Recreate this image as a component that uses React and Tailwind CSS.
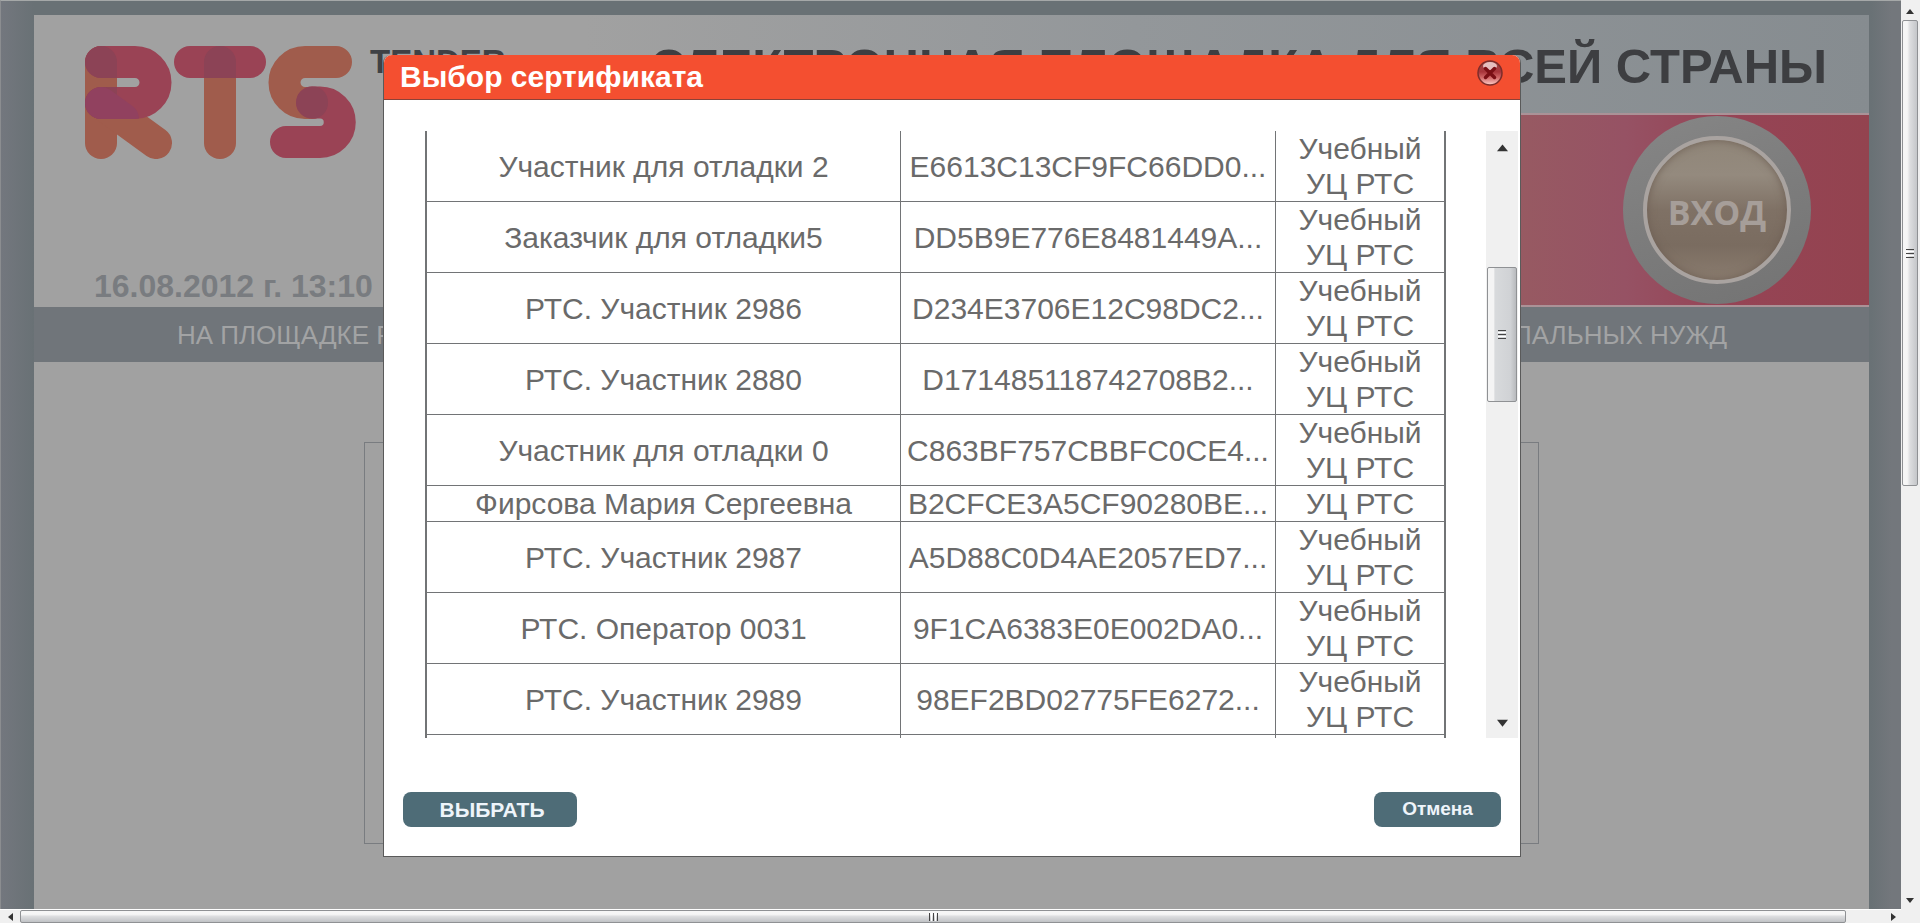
import React, { useState } from 'react';

const certificates = [
  { owner: 'Участник для отладки 2', thumbprint: 'E6613C13CF9FC66DD0...', issuer: 'Учебный УЦ РТС' },
  { owner: 'Заказчик для отладки5', thumbprint: 'DD5B9E776E8481449A...', issuer: 'Учебный УЦ РТС' },
  { owner: 'РТС. Участник 2986', thumbprint: 'D234E3706E12C98DC2...', issuer: 'Учебный УЦ РТС' },
  { owner: 'РТС. Участник 2880', thumbprint: 'D171485118742708B2...', issuer: 'Учебный УЦ РТС' },
  { owner: 'Участник для отладки 0', thumbprint: 'C863BF757CBBFC0CE4...', issuer: 'Учебный УЦ РТС' },
  { owner: 'Фирсова Мария Сергеевна', thumbprint: 'B2CFCE3A5CF90280BE...', issuer: 'УЦ РТС' },
  { owner: 'РТС. Участник 2987', thumbprint: 'A5D88C0D4AE2057ED7...', issuer: 'Учебный УЦ РТС' },
  { owner: 'РТС. Оператор 0031', thumbprint: '9F1CA6383E0E002DA0...', issuer: 'Учебный УЦ РТС' },
  { owner: 'РТС. Участник 2989', thumbprint: '98EF2BD02775FE6272...', issuer: 'Учебный УЦ РТС' },
];

function Logo() {
  return (
    <svg className="w-[271px] h-[113px]" viewBox="0 0 271 113" fill="none" strokeWidth="32" strokeLinecap="round" strokeLinejoin="round" aria-label="RTS">
      <defs>
        <mask id="rts-red" maskUnits="userSpaceOnUse" x="0" y="0" width="271" height="113">
          <g stroke="#fff">
            <path d="M16 16H50a20.5 20.5 0 0 1 0 41H16" />
            <path d="M105 16H165" />
            <path d="M227 56.500H235a19.700 19.700 0 0 1 0 39.500H201" />
          </g>
        </mask>
      </defs>
      <g stroke="#a05c4c">
        <path d="M16 16V97" />
        <path d="M16 57L71 97" />
        <path d="M135 16V97" />
        <path d="M251 16H220a20.500 20.500 0 0 0 0 41H227" />
      </g>
      <g stroke="#9a4355">
        <path d="M16 16H50a20.500 20.500 0 0 1 0 41H16" />
        <path d="M105 16H165" />
        <path d="M227 56.500H235a19.700 19.700 0 0 1 0 39.500H201" />
      </g>
      <g stroke="#8c4356" mask="url(#rts-red)">
        <path d="M16 16V97" />
        <path d="M135 16V97" />
        <path d="M227 56V57" />
      </g>
      <path d="M16 57L38 73" stroke="#91415f" mask="url(#rts-red)" />
    </svg>
  );
}

function Arrow({ dir, className = 'size-2' }) {
  const points = { up: '0,6 4,1 8,6', down: '0,2 8,2 4,7', left: '6,0 1,4 6,8', right: '2,0 7,4 2,8' };
  return (
    <svg className={className} viewBox="0 0 8 8"><polygon points={points[dir]} fill="#333" /></svg>
  );
}

function VerticalGrip() {
  return (
    <span className="flex flex-col gap-px">
      <span className="block w-2 h-px bg-[#444]" />
      <span className="block w-2 h-px bg-white" />
      <span className="block w-2 h-px bg-[#444]" />
      <span className="block w-2 h-px bg-white" />
      <span className="block w-2 h-px bg-[#444]" />
    </span>
  );
}

function PageHeader() {
  return (
    <header className="flex h-[292px] bg-[linear-gradient(90deg,#a1a1a1_30%,#93979a_60%,#868c90_100%)]">
      <div className="w-[480px] shrink-0 flex flex-col justify-between pl-[51px] pt-[31px] pb-[3px] bg-[#a1a1a1]">
        <div className="flex items-start">
          <Logo />
          <span className="ml-[14px] text-[33px] leading-8 font-bold text-[#3f4145]">TENDER</span>
        </div>
        <time className="pl-[9px] text-[32px] leading-9 font-bold text-[#797c80] whitespace-nowrap">16.08.2012 г. 13:10</time>
      </div>
      <div className="flex-1 min-w-0 flex flex-col">
        <div className="h-[98px] pr-[42px] flex items-center justify-end">
          <h1 className="pt-1 text-[49px] leading-14 font-bold text-[#3d3e41] whitespace-nowrap">ЭЛЕКТРОННАЯ ПЛОЩАДКА ДЛЯ ВСЕЙ СТРАНЫ</h1>
        </div>
        <div className="flex-1 flex items-center justify-end pr-[58px] border-y-2 border-[#ab9297] bg-[linear-gradient(90deg,#975a62_74%,#965264_82%,#964456_89%,#93434f_100%)]">
          <button type="button" className="size-[188px] rounded-full flex items-center justify-center bg-[linear-gradient(160deg,#868686,#7c7c7c_50%,#737373)]">
            <span className="size-[148px] pt-1 rounded-full border-4 border-[#a9a3a0] flex items-center justify-center bg-[linear-gradient(180deg,#908679_0%,#948a7e_25%,#7f7165_50%,#7a6c60_75%,#8a7c6f_100%)] shadow-[inset_0_0_8px_#6e5f54] font-['Open_Sans',sans-serif] text-[34px] font-bold text-[#a69e99]">ВХОД</span>
          </button>
        </div>
      </div>
    </header>
  );
}

function CloseIcon() {
  return (
    <svg className="size-7" viewBox="0 0 28 28">
      <defs>
        <linearGradient id="close-ball" x1="0" y1="0" x2="0" y2="1">
          <stop offset="0" stopColor="#9c4a48" />
          <stop offset=".45" stopColor="#a8343a" />
          <stop offset=".7" stopColor="#d26a6a" />
          <stop offset="1" stopColor="#ffd0cb" />
        </linearGradient>
      </defs>
      <circle cx="14" cy="14" r="12" fill="url(#close-ball)" stroke="#7d2d2a" strokeWidth="1.500" />
      <ellipse cx="14" cy="7" rx="7" ry="4" fill="#f6dedd" opacity=".8" />
      <path d="M9.500 9.500L18.500 18.500M18.500 9.500L9.500 18.500" stroke="#7a0f15" strokeWidth="3.500" strokeLinecap="round" />
    </svg>
  );
}

function CertificateDialog({ onClose }) {
  const [selected, setSelected] = useState(null);

  return (
    <div role="dialog" aria-labelledby="dialog-title" className="w-[1138px] max-w-full rounded-t-lg border border-t-0 border-[#5a5a5a] bg-white">
      <div className="h-[45px] flex items-center justify-between pl-4 pr-4 rounded-t-lg bg-[#f44f30] border-b border-[#8c4238]">
        <h2 id="dialog-title" className="text-[30px] leading-9 font-bold text-white">Выбор сертификата</h2>
        <button type="button" aria-label="Закрыть" onClick={onClose} className="mb-2"><CloseIcon /></button>
      </div>

      <div className="flex justify-between h-[607px] mt-[31px] pl-[41px] pr-0.5 overflow-hidden">
        <div className="flex-1 mr-10 overflow-hidden">
          <table className="w-full table-fixed border-separate border-spacing-0 border-x-2 border-[#727476] text-[30px] leading-[35px] text-center text-[#6a6a6a]">
            <colgroup>
              <col />
              <col className="w-[375px]" />
              <col className="w-[169px]" />
            </colgroup>
            <tbody>
              {certificates.map((cert) => (
                <tr key={cert.thumbprint} onClick={() => setSelected(cert.thumbprint)} aria-selected={selected === cert.thumbprint}>
                  <td className="p-0 border-b border-[#727476]">{cert.owner}</td>
                  <td className="p-0 border-b border-l border-[#727476] whitespace-nowrap">{cert.thumbprint}</td>
                  <td className="px-5 py-0 border-b border-l border-[#727476]">{cert.issuer}</td>
                </tr>
              ))}
              <tr className="h-9">
                <td />
                <td className="border-l border-[#727476]" />
                <td className="border-l border-[#727476]" />
              </tr>
            </tbody>
          </table>
        </div>
        <div className="w-8 flex flex-col items-center bg-[#f0f0f0]">
          <div className="h-[136px] pt-3"><Arrow dir="up" className="size-[11px]" /></div>
          <div className="w-[30px] h-[135px] flex items-center justify-center border border-[#8f9194] rounded-xs bg-[linear-gradient(90deg,#f4f4f4_20%,#d8dadc_25%,#d0d2d5_80%,#b8babd_100%)]">
            <VerticalGrip />
          </div>
          <div className="flex-1 flex items-end pb-[10px]"><Arrow dir="down" className="size-[11px]" /></div>
        </div>
      </div>

      <div className="flex justify-between px-[19px] pt-[54px] pb-[29px]">
        <button type="button" className="w-[174px] h-[35px] pl-1 rounded-lg bg-[#4e6c77] text-[21px] font-bold text-[#eef4fa]">ВЫБРАТЬ</button>
        <button type="button" onClick={onClose} className="w-[127px] h-[35px] rounded-lg bg-[#4e6c77] text-[19px] font-bold text-[#eef4fa]">Отмена</button>
      </div>
    </div>
  );
}

export default function App() {
  const [open, setOpen] = useState(true);

  return (
    <div className="relative h-screen grid grid-cols-[minmax(0,1fr)_19px] grid-rows-[minmax(0,1fr)_14px] overflow-hidden bg-[#f0f0f0] font-['Liberation_Sans',Arial,sans-serif]">
      <div className="overflow-hidden pl-[33px] pr-8 pt-[14px] border-t border-l border-t-[#a5a8a8] border-l-[#8b8d90] bg-[linear-gradient(90deg,#73777e_0px,#697175_33px,#697175_1870px,#73777c_1890px)]">
        <PageHeader />
        <nav className="h-[55px] pt-0.5 flex items-center justify-between pl-[143px] pr-[142px] bg-[#70757a] text-[26px] text-[#a2a3a4] whitespace-nowrap">
          <span>НА ПЛОЩАДКЕ РТС</span>
          <span>МУНИЦИПАЛЬНЫХ НУЖД</span>
        </nav>
        <main className="h-full pt-20 bg-[#a1a1a1]">
          <div className="mx-[330px] h-[402px] border border-[#797c80]" />
        </main>
      </div>

      {/* Window scrollbars */}
      <div className="flex flex-col items-center pt-2 pb-[5px] pr-px bg-[#f0f0f0]">
        <Arrow dir="up" />
        <div className="mt-1 w-4 h-[466px] flex items-center justify-center border border-[#8f9194] rounded-xs bg-[linear-gradient(90deg,#f6f6f6_30%,#dcdddf_50%,#c4c6c9_100%)]">
          <VerticalGrip />
        </div>
        <div className="mt-auto"><Arrow dir="down" /></div>
      </div>
      <div className="flex items-center pl-[7px] pr-1 border-t border-white bg-[#f0f0f0]">
        <Arrow dir="left" />
        <div className="ml-[5px] mr-[43px] flex-1 h-[13px] flex items-center justify-center gap-px border border-[#8f9194] rounded-xs bg-[linear-gradient(180deg,#f6f6f6_30%,#dcdddf_50%,#c0c2c5_100%)]">
          <span className="w-px h-2 bg-[#444]" />
          <span className="w-px h-2 bg-white" />
          <span className="w-px h-2 bg-[#444]" />
          <span className="w-px h-2 bg-white" />
          <span className="w-px h-2 bg-[#444]" />
        </div>
        <Arrow dir="right" />
      </div>

      {open && (
        <div className="absolute inset-x-0 top-[55px] flex justify-center pr-4">
          <CertificateDialog onClose={() => setOpen(false)} />
        </div>
      )}
    </div>
  );
}
